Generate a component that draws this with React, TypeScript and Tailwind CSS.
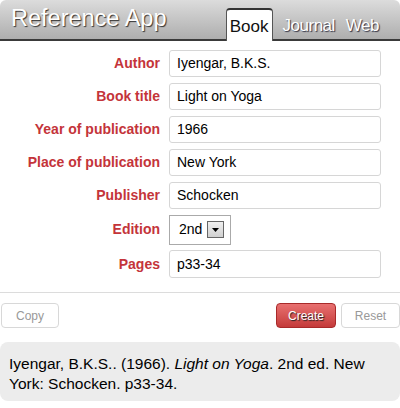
import React from "react";

const rows: [string, string][] = [
  ["Author", "Iyengar, B.K.S."],
  ["Book title", "Light on Yoga"],
  ["Year of publication", "1966"],
  ["Place of publication", "New York"],
  ["Publisher", "Schocken"],
];

function Label({ children }: { children: React.ReactNode }) {
  return (
    <div className="w-[160px] text-right text-[14px] font-bold text-[#c4343a] pr-0">{children}</div>
  );
}

export default function App() {
  return (
    <div
      className="w-[400px] h-[408px] bg-white overflow-hidden"
      style={{ fontFamily: '"Liberation Sans", Arial, sans-serif' }}
    >
      {/* Header */}
      <div className="h-[41px] rounded-t-[6px] bg-gradient-to-b from-[#dcdcdc] to-[#aeaeae] border-b-[2px] border-[#3a3a3a] flex items-end justify-between pl-[11px] pr-[20px] relative">
        <div className="self-center text-[23.5px] leading-none text-white pb-[2px] [text-shadow:1px_1px_1px_#333]">
          Reference App
        </div>
        <div className="flex items-end gap-0 -mb-[2px]">
          <div className="h-[33px] w-[47px] bg-white rounded-t-[4px] border-t-[2px] border-x border-[#333] border-x-[#555] flex items-center justify-center text-[17px] text-[#111] pt-[3px]">
            Book
          </div>
          <div className="h-[33px] px-[10px] flex items-center text-[17px] tracking-[-0.5px] text-white [text-shadow:1px_1px_1px_#334] pt-[2px]">
            Journal
          </div>
          <div className="h-[33px] px-[1px] flex items-center text-[17px] tracking-[-0.5px] text-white [text-shadow:1px_1px_1px_#334] pt-[2px]">
            Web
          </div>
        </div>
      </div>

      {/* Form */}
      <div className="flex flex-col gap-[6px] pt-[9px]">
        {rows.map(([l, v]) => (
          <div key={l} className="flex items-center gap-[9px]">
            <Label>{l}</Label>
            <div className="w-[212px] h-[27px] border border-[#d6d6d6] rounded-[3px] flex items-center px-[7px] text-[14px] text-black">
              {v}
            </div>
          </div>
        ))}
        <div className="flex items-center gap-[9px] h-[29px] mt-[0px]">
          <Label>Edition</Label>
          <div className="w-[62px] h-[30px] border border-[#aaa] flex items-center pl-[9px] pr-[6px] justify-between text-[14px] text-black">
            <span>2nd</span>
            <div className="w-[17px] h-[17px] border border-[#666] bg-gradient-to-b from-[#f0f0f0] to-[#d0d0d0] flex items-center justify-center">
              <svg width="7" height="4" viewBox="0 0 7 4">
                <path d="M0 0 H7 L3.5 4 Z" fill="#000" />
              </svg>
            </div>
          </div>
        </div>
        <div className="flex items-center gap-[9px] mt-[0px]">
          <Label>Pages</Label>
          <div className="w-[212px] h-[28px] border border-[#d6d6d6] rounded-[3px] flex items-center px-[7px] text-[14px] text-black">
            p33-34
          </div>
        </div>
      </div>

      <div className="mt-[14px] border-t border-[#dcdcdc]" />

      {/* Buttons */}
      <div className="flex items-center justify-between pt-[10px]">
        <div className="ml-[1px] w-[58px] h-[25px] border border-[#d8d8d8] rounded-[4px] flex items-center justify-center text-[12px] text-[#999]">
          Copy
        </div>
        <div className="flex gap-[5px]">
          <div className="w-[60px] h-[25px] rounded-[4px] border border-[#a82a2a] bg-gradient-to-b from-[#e87070] to-[#c43a3a] flex items-center justify-center text-[12px] text-white [text-shadow:1px_1px_1px_#222]">
            Create
          </div>
          <div className="w-[59px] h-[25px] border border-[#d8d8d8] rounded-[4px] flex items-center justify-center text-[12px] text-[#999]">
            Reset
          </div>
        </div>
      </div>

      {/* Citation */}
      <div className="mt-[14px] bg-[#ececec] rounded-[8px] h-[59px] pl-[9px] pr-[14px] pt-[12px] text-[15.5px] leading-[20px] text-black">
        Iyengar, B.K.S.. (1966). <i>Light on Yoga</i>. 2nd ed. New York: Schocken. p33-34.
      </div>
    </div>
  );
}
